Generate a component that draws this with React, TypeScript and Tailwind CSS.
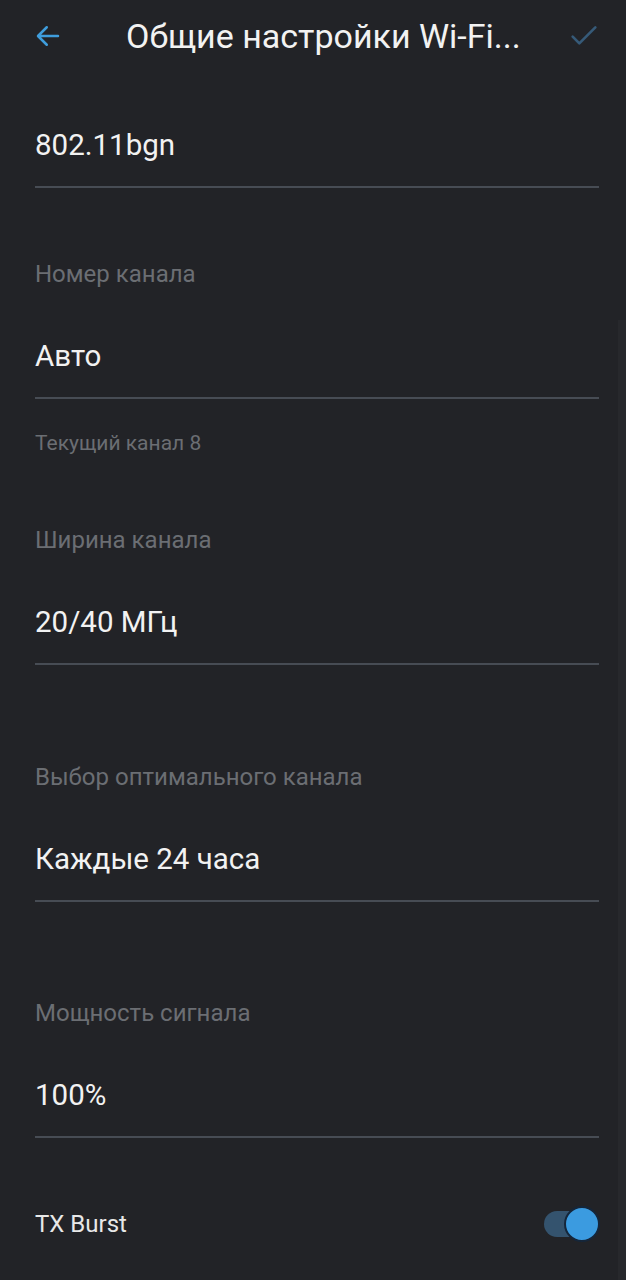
import React from 'react';

const font = { fontFamily: 'Roboto, "Noto Sans", sans-serif' };

function Divider() {
  return <div className="h-[2px] bg-[#474c54] mr-[27px]" />;
}

interface FieldProps {
  label?: string;
  value: string;
  helper?: string;
}

function Field({ label, value, helper }: FieldProps) {
  return (
    <div className="flex flex-col">
      {label && <div className="text-[24px] leading-[30px] text-[#6b6e73] mb-[50px]">{label}</div>}
      <div className="text-[29.5px] leading-[34px] text-[#f2f2f2] mb-[24px]">{value}</div>
      <Divider />
      {helper && <div className="text-[21px] leading-[24px] text-[#6b6e73] mt-[32px]">{helper}</div>}
    </div>
  );
}

export default function App() {
  return (
    <div className="relative w-[626px] h-[1280px] bg-[#222327] overflow-hidden" style={font}>
      <div className="absolute right-0 top-[320px] bottom-0 w-[8px] bg-[#27282c]" />

      <header className="h-[72px] flex items-center pl-[33px] pr-[26px]">
        <svg width="30" height="30" viewBox="0 0 24 24" fill="none" stroke="#3f9ddc" strokeWidth="2" strokeLinecap="round" strokeLinejoin="round">
          <path d="M20 12H4.5M11 5l-7 7 7 7" />
        </svg>
        <h1 className="flex-1 text-[34px] leading-[40px] text-[#f2f2f2] ml-[63px] whitespace-nowrap">Общие настройки Wi-Fi...</h1>
        <svg width="32" height="32" viewBox="0 0 24 24" fill="none" stroke="#365a78" strokeWidth="2" strokeLinecap="round" strokeLinejoin="round">
          <path d="M3.5 12.5l5 5 12-12" />
        </svg>
      </header>

      <main className="flex flex-col pl-[35px] pt-[56px]">
        <Field value="802.11bgn" />
        <div className="h-[71px]" />
        <Field label="Номер канала" value="Авто" helper="Текущий канал 8" />
        <div className="h-[70px]" />
        <Field label="Ширина канала" value="20/40 МГц" />
        <div className="h-[97px]" />
        <Field label="Выбор оптимального канала" value="Каждые 24 часа" />
        <div className="h-[96px]" />
        <Field label="Мощность сигнала" value="100%" />
        <div className="h-[71px]" />
        <div className="flex items-center justify-between pr-[30px] h-[30px]">
          <span className="text-[24px] leading-[30px] text-[#e8e8e8]">TX Burst</span>
          <div className="relative w-[52px] h-[26px] rounded-full bg-[#34536e]">
            <div className="absolute right-[-4px] top-1/2 -translate-y-1/2 w-[36px] h-[36px] rounded-full bg-[#3b9be0] border-[2px] border-[#15263a]" />
          </div>
        </div>
      </main>
    </div>
  );
}
